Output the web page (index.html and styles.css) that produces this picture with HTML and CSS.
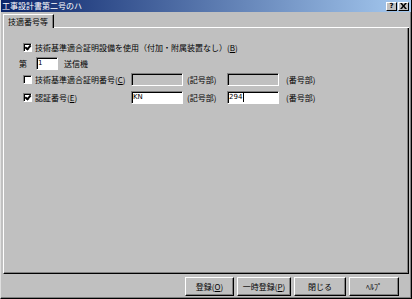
FILE: index.html
```html
<!DOCTYPE html>
<html lang="ja">
<head>
    <meta charset="UTF-8">
    <meta name="viewport" content="width=device-width, initial-scale=1.0">
    <title>工事設計書第二号のハ</title>
    <link rel="stylesheet" href="styles.css">
</head>
<body>

    <div class="window">
        <div class="titlebar">
            <span class="title">工事設計書第二号のハ</span>
            <div class="caption-btns">
                <span class="cap-btn">?</span>
                <span class="cap-btn">
                    <svg width="7" height="6" viewBox="0 0 7 6"><path d="M0 0h2l1.5 2 1.5-2h2L4.5 3 7 6H5L3.5 4 2 6H0l2.5-3z" fill="#000"/></svg>
                </span>
            </div>
        </div>

        <div class="tabs">
            <div class="tab">技適番号等</div>
            <div class="tab-rest"></div>
        </div>

        <div class="panel">
            <div class="row row-first">
                <span class="check on"></span>
                <span>技術基準適合証明設備を使用（付加・附属装置なし）(<u>B</u>)</span>
            </div>

            <div class="row row-tx">
                <span class="dai">第</span>
                <span class="field small">1</span>
                <span class="after">送信機</span>
            </div>

            <div class="grid">
                <div class="label"><span class="check"></span><span>技術基準適合証明番号(<u>C</u>)</span></div>
                <span class="field off"></span>
                <span>(記号部)</span>
                <span class="field off"></span>
                <span>(番号部)</span>

                <div class="label"><span class="check on"></span><span>認証番号(<u>E</u>)</span></div>
                <span class="field">KN</span>
                <span>(記号部)</span>
                <span class="field">294<i class="caret"></i></span>
                <span>(番号部)</span>
            </div>
        </div>

        <!-- 下のボタン -->
        <div class="footer">
            <button class="btn w49">登録(<u>O</u>)</button>
            <button class="btn w54">一時登録(<u>P</u>)</button>
            <button class="btn w52">閉じる</button>
            <button class="btn w50">ﾍﾙﾌﾟ</button>
        </div>
    </div>

</body>
</html>
```

FILE: styles.css
```css
body {
    margin: 0;
    padding: 0;
    background-color: #c0c0c0;
    font-family: "Noto Sans CJK JP", "DejaVu Sans", sans-serif;
    font-size: 8px;
    color: #000;
    overflow: hidden;
}

.window {
    width: 412px;
    height: 299px;
    box-sizing: border-box;
    display: flex;
    flex-direction: column;
    background-color: #c0c0c0;
    border-left: 1px solid #dfdfdf;
    border-right: 1px solid #000;
    border-bottom: 1px solid #000;
    box-shadow: inset -1px -1px 0 #808080;
}

/* タイトルバー */
.titlebar {
    height: 12px;
    display: flex;
    align-items: center;
    justify-content: space-between;
    padding: 0 2px 0 1px;
    background: linear-gradient(to right, #0a246a, #a6caf0);
    color: #fff;
}

.title {
    line-height: 12px;
}

.caption-btns {
    display: flex;
    gap: 1px;
}

.cap-btn {
    width: 11px;
    height: 9px;
    box-sizing: border-box;
    display: flex;
    align-items: center;
    justify-content: center;
    background-color: #c0c0c0;
    color: #000;
    font-family: "DejaVu Sans", sans-serif;
    font-weight: bold;
    font-size: 7px;
    border-top: 1px solid #fff;
    border-left: 1px solid #fff;
    border-right: 1px solid #000;
    border-bottom: 1px solid #000;
}

/* タブ */
.tabs {
    display: flex;
    align-items: flex-end;
    height: 15px;
    margin-top: 1px;
    padding-left: 2px;
}

.tab {
    height: 14px;
    box-sizing: border-box;
    padding: 0 5px 0 4px;
    line-height: 13px;
    border-top: 1px solid #fff;
    border-left: 1px solid #fff;
    border-right: 1px solid #000;
    box-shadow: inset -1px 0 0 #808080;
    position: relative;
    z-index: 1;
}

.tab-rest {
    flex: 1;
    margin-right: 2px;
    border-bottom: 1px solid #fff;
}

/* パネル */
.panel {
    height: 246px;
    margin: 0 2px 0 2px;
    box-sizing: border-box;
    padding: 14px 0 0 19px;
    border-left: 1px solid #fff;
    border-right: 1px solid #000;
    border-bottom: 1px solid #000;
    box-shadow: inset -1px -1px 0 #808080;
}

.row {
    display: flex;
    align-items: center;
}

.row-first {
    gap: 3px;
    height: 10px;
}

.row-tx {
    margin-top: 5px;
    height: 12px;
}

.dai {
    width: 17px;
    margin-left: -4px;
}

.after {
    margin-left: 6px;
}

.check {
    width: 9px;
    height: 9px;
    box-sizing: border-box;
    background-color: #fff;
    border-top: 1px solid #808080;
    border-left: 1px solid #808080;
    border-right: 1px solid #fff;
    border-bottom: 1px solid #fff;
    box-shadow: inset 1px 1px 0 #000;
    flex-shrink: 0;
    position: relative;
}

.check.on::after {
    content: "";
    position: absolute;
    left: 2px;
    top: 0px;
    width: 2px;
    height: 4px;
    border-right: 2px solid #000;
    border-bottom: 2px solid #000;
    transform: rotate(40deg);
}

.field {
    height: 13px;
    box-sizing: border-box;
    display: flex;
    align-items: center;
    padding-left: 1px;
    background-color: #fff;
    border-top: 1px solid #808080;
    border-left: 1px solid #808080;
    border-right: 1px solid #fff;
    border-bottom: 1px solid #fff;
    box-shadow: inset 1px 1px 0 #000;
    font-family: "DejaVu Sans", sans-serif;
    font-size: 7px;
}

.field.small {
    width: 22px;
}

.field.off {
    background-color: #c0c0c0;
}

.caret {
    width: 1px;
    height: 9px;
    background-color: #000;
    margin-left: 1px;
}

.grid {
    display: grid;
    grid-template-columns: 108px 52px 44px 52px auto;
    grid-template-rows: 14px 14px;
    row-gap: 4px;
    align-items: center;
    margin-top: 3px;
}

.grid > span:nth-child(5n+3) {
    padding-left: 4px;
}

.grid > span:nth-child(5n) {
    padding-left: 7px;
}

.label {
    display: flex;
    align-items: center;
    gap: 3px;
}

/* ボタン */
.footer {
    flex: 1;
    display: flex;
    justify-content: flex-end;
    align-items: flex-start;
    gap: 3px;
    padding: 3px 12px 0 0;
}

.btn {
    height: 19px;
    padding: 0;
    background-color: #c0c0c0;
    font-family: "Noto Sans CJK JP", sans-serif;
    font-size: 8px;
    color: #000;
    border-top: 1px solid #fff;
    border-left: 1px solid #fff;
    border-right: 1px solid #000;
    border-bottom: 1px solid #000;
    box-shadow: inset -1px -1px 0 #808080;
}

.w49 { width: 49px; }
.w54 { width: 54px; }
.w52 { width: 52px; }
.w50 { width: 50px; }
```
